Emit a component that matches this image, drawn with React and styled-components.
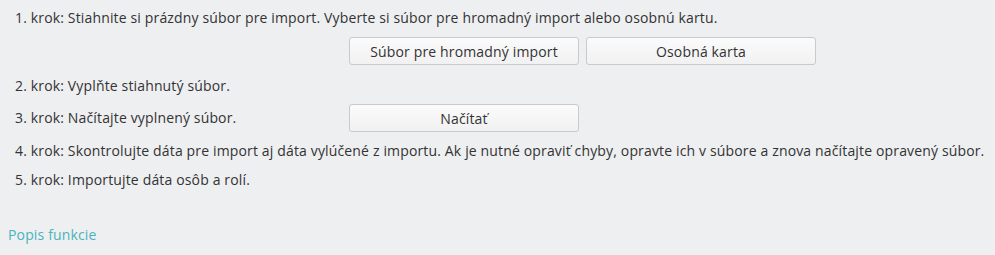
import React from "react";
import styled, { createGlobalStyle } from "styled-components";

const Global = createGlobalStyle`
  html, body { margin: 0; padding: 0; background: #eeeff1; }
  body {
    font-family: "Open Sans", "Noto Sans", sans-serif;
    font-size: 14px;
    letter-spacing: 0.15px;
    color: #333;
  }
`;

const Page = styled.div`
  padding: 8px 8px 0 8px;
  height: 255px;
  box-sizing: border-box;
`;

const Steps = styled.div`
  display: grid;
  grid-template-columns: 334px auto;
  padding-left: 7px;
  align-items: center;
`;

const Text = styled.div`
  grid-column: ${(p) => (p.$span ? "1 / -1" : "1")};
  line-height: 20px;
  margin-top: ${(p) => p.$top || 0}px;
  white-space: nowrap;
`;

const Buttons = styled.div`
  grid-column: 2;
  display: flex;
  gap: 7px;
  margin-top: ${(p) => p.$top || 0}px;
`;

const Button = styled.button`
  width: 230px;
  height: 28px;
  box-sizing: border-box;
  border: 1px solid #c9cacc;
  border-radius: 3px;
  background: linear-gradient(#fbfbfb, #f1f1f2);
  font-family: "Open Sans", "Noto Sans", sans-serif;
  font-size: 14px;
  letter-spacing: 0.15px;
  color: #333;
  padding: 0;
  cursor: pointer;
`;

const Link = styled.a`
  display: inline-block;
  margin-top: 35px;
  line-height: 20px;
  color: #4bb3bd;
  text-decoration: none;
`;

export default function App() {
  return (
    <>
      <Global />
      <Page>
        <Steps>
          <Text $span>
            1. krok: Stiahnite si prázdny súbor pre import. Vyberte si súbor pre hromadný import alebo osobnú kartu.
          </Text>
          <Buttons $top={9}>
            <Button>Súbor pre hromadný import</Button>
            <Button>Osobná karta</Button>
          </Buttons>
          <Text $span $top={11}>2. krok: Vyplňte stiahnutý súbor.</Text>
          <Text $top={8}>3. krok: Načítajte vyplnený súbor.</Text>
          <Buttons $top={8}>
            <Button>Načítať</Button>
          </Buttons>
          <Text $span $top={9}>
            4. krok: Skontrolujte dáta pre import aj dáta vylúčené z importu. Ak je nutné opraviť chyby, opravte ich v súbore a znova načítajte opravený súbor.
          </Text>
          <Text $span $top={9}>5. krok: Importujte dáta osôb a rolí.</Text>
        </Steps>
        <Link href="#">Popis funkcie</Link>
      </Page>
    </>
  );
}
